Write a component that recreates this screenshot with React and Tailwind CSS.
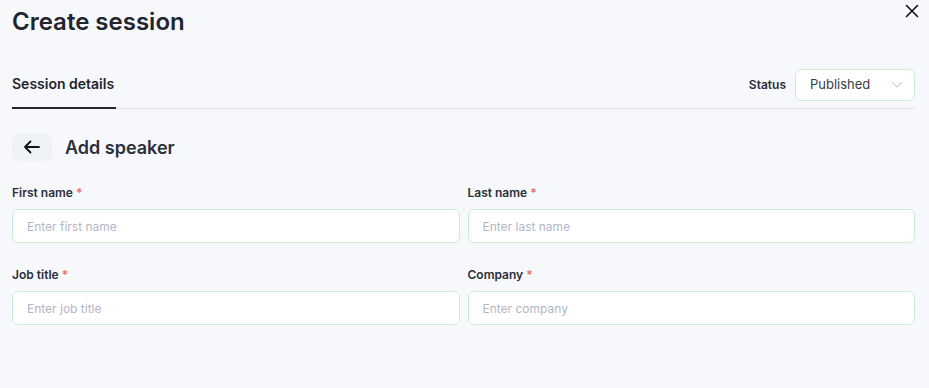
import React from "react";

function Field({ label, placeholder }) {
  return (
    <div className="flex flex-col">
      <label className="text-[12px] font-semibold text-[#2b2f3a] leading-[16px] h-[16px]">
        {label} <span className="text-[#f26b6b]">*</span>
      </label>
      <input
        placeholder={placeholder}
        className="mt-[8px] h-[34px] w-full rounded-[6px] border border-[#c8eed6] bg-white px-[14px] text-[12px] text-[#2b2f3a] placeholder:text-[#b3b6c8] outline-none"
      />
    </div>
  );
}

export default function App() {
  return (
    <div className="relative min-h-[388px] w-[929px] bg-[#f7f8fc] px-[12px] pr-[14px] font-['Inter',sans-serif] text-[#23262f]">
      <button className="absolute right-[10px] top-[4px] text-[#111]">
        <svg width="14" height="14" viewBox="0 0 14 14" fill="none" stroke="currentColor" strokeWidth="1.6" strokeLinecap="round">
          <path d="M1.5 1.5L12.5 12.5M12.5 1.5L1.5 12.5" />
        </svg>
      </button>
      <h1 className="pt-[6px] text-[24px] font-semibold leading-[32px] text-[#22252e]">Create session</h1>

      <div className="mt-[31px] flex items-end justify-between border-b border-[#dde1f0]">
        <div className="flex flex-col">
          <span className="mt-[1px] text-[14px] font-semibold leading-[18px] text-[#22252e]">Session details</span>
          <div className="mt-[14px] mb-[-1px] h-[2px] w-[104px] bg-[#22252e]" />
        </div>
        <div className="mb-[7px] flex items-center gap-[9px]">
          <span className="text-[12px] font-semibold text-[#2b2f3a]">Status</span>
          <div className="flex h-[32px] w-[120px] items-center justify-between rounded-[6px] border border-[#c8eed6] bg-white pl-[14px] pr-[12px]">
            <span className="text-[13px] text-[#3a3d48]">Published</span>
            <svg width="10" height="6" viewBox="0 0 10 6" fill="none" stroke="#b9bcc8" strokeWidth="1">
              <path d="M0.5 0.5L5 5.2L9.5 0.5" />
            </svg>
          </div>
        </div>
      </div>

      <div className="mt-[24px] flex items-center gap-[13px]">
        <button className="flex h-[28px] w-[40px] items-center justify-center rounded-[6px] bg-[#eef1f6]">
          <svg width="18" height="14" viewBox="0 0 18 14" fill="none" stroke="#111" strokeWidth="1.8" strokeLinecap="round" strokeLinejoin="round">
            <path d="M16 7H2M7.5 1.5L2 7l5.5 5.5" />
          </svg>
        </button>
        <h2 className="text-[18px] font-semibold text-[#2b2f3a]">Add speaker</h2>
      </div>

      <div className="mt-[24px] grid grid-cols-2 gap-x-[8px] gap-y-[24px]">
        <Field label="First name" placeholder="Enter first name" />
        <Field label="Last name" placeholder="Enter last name" />
        <Field label="Job title" placeholder="Enter job title" />
        <Field label="Company" placeholder="Enter company" />
      </div>
    </div>
  );
}
